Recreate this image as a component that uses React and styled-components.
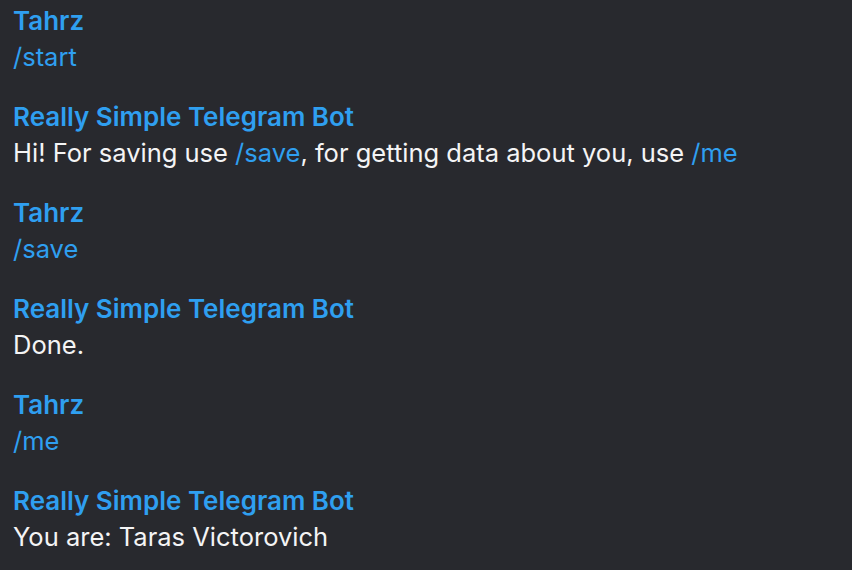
import React from "react";
import styled, { createGlobalStyle } from "styled-components";

const blue = "#2f9ff0";

const GlobalStyle = createGlobalStyle`
  html, body {
    margin: 0;
    padding: 0;
    background: #28292e;
  }
`;

const Chat = styled.div`
  width: 852px;
  height: 570px;
  box-sizing: border-box;
  padding: 3px 13px 0;
  background: #28292e;
  font-family: Inter, "Noto Sans", sans-serif;
  line-height: 36px;
  display: flex;
  flex-direction: column;
  gap: 24px;
  overflow: hidden;
`;

const Message = styled.div`
  display: flex;
  flex-direction: column;
`;

const Author = styled.div`
  color: ${blue};
  font-size: 26px;
  font-weight: 600;
`;

const Text = styled.div`
  color: #f4f4f5;
  font-size: 25.5px;
  font-weight: 400;
`;

const Command = styled.span`
  color: ${blue};
`;

const messages = [
  { author: "Tahrz", text: [<Command key="c">/start</Command>] },
  {
    author: "Really Simple Telegram Bot",
    text: [
      "Hi! For saving use ",
      <Command key="s">/save</Command>,
      ", for getting data about you, use ",
      <Command key="m">/me</Command>,
    ],
  },
  { author: "Tahrz", text: [<Command key="c">/save</Command>] },
  { author: "Really Simple Telegram Bot", text: ["Done."] },
  { author: "Tahrz", text: [<Command key="c">/me</Command>] },
  { author: "Really Simple Telegram Bot", text: ["You are: Taras Victorovich"] },
];

export default function App() {
  return (
    <>
      <GlobalStyle />
      <Chat>
        {messages.map((m, i) => (
          <Message key={i}>
            <Author>{m.author}</Author>
            <Text>{m.text}</Text>
          </Message>
        ))}
      </Chat>
    </>
  );
}
